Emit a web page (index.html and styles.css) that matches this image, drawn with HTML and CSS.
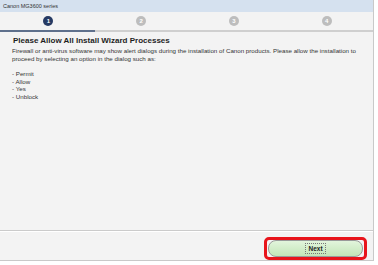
FILE: index.html
```html
<!DOCTYPE html>
<html lang="en">
<head>
    <meta charset="UTF-8">
    <title>Canon MG3600 series</title>
    <link rel="stylesheet" href="styles.css">
</head>
<body>

    <div class="window">
        <div class="titlebar">Canon MG3600 series</div>

        <!-- Pasos del asistente -->
        <div class="steps">
            <div class="step active"><span class="dot">1</span></div>
            <div class="step"><span class="dot">2</span></div>
            <div class="step"><span class="dot">3</span></div>
            <div class="step"><span class="dot">4</span></div>
        </div>

        <div class="content">
            <h1>Please Allow All Install Wizard Processes</h1>
            <p>Firewall or anti-virus software may show alert dialogs during the installation of Canon products. Please allow the installation to proceed by selecting an option in the dialog such as:</p>
            <ul class="options">
                <li>- Permit</li>
                <li>- Allow</li>
                <li>- Yes</li>
                <li>- Unblock</li>
            </ul>
        </div>

        <div class="footer">
            <span class="highlight">
                <button class="next-btn"><span class="focus">Next</span></button>
            </span>
        </div>
    </div>

</body>
</html>
```

FILE: styles.css
```css
body {
    margin: 0;
    padding: 0;
    background: #fff;
    font-family: "Liberation Sans", Arial, sans-serif;
    color: #333;
}

.window {
    width: 373px;
    height: 260px;
    background: #f3f3f3;
    border-right: 1px solid #c9c9c9;
    border-bottom: 1px solid #c9c9c9;
    display: flex;
    flex-direction: column;
}

/* Barra de titulo */
.titlebar {
    height: 12px;
    line-height: 12px;
    background: #d5e1ef;
    font-size: 5.5px;
    padding-left: 3px;
    color: #333;
}

/* Pasos */
.steps {
    display: grid;
    grid-template-columns: repeat(4, 1fr);
    padding-left: 2px;
    border-bottom: 2px solid #cfcfcf;
}

.step {
    height: 18px;
    display: flex;
    align-items: center;
    justify-content: center;
}

.step.active {
    box-shadow: 0 2px 0 #5e708c;
    margin-left: -2px;
    padding-left: 2px;
}

.dot {
    width: 10px;
    height: 10px;
    border-radius: 50%;
    background: #bdbdbd;
    color: #fff;
    font-size: 6px;
    font-weight: bold;
    line-height: 10px;
    text-align: center;
}

.step.active .dot {
    background: #263a63;
}

/* Contenido */
.content {
    flex: 1;
    padding: 4px 12px 0 12px;
}

.content h1 {
    margin: 0 0 1px 1px;
    font-size: 8px;
    line-height: 10px;
    font-weight: bold;
    color: #1e1e1e;
}

.content p {
    margin: 0;
    font-size: 6.2px;
    line-height: 8px;
    color: #333;
}

.options {
    list-style: none;
    margin: 7px 0 0 0;
    padding: 0;
    font-size: 6.2px;
    line-height: 7.6px;
    color: #333;
}

/* Pie con boton */
.footer {
    height: 30px;
    border-top: 1px solid #cbcbcb;
    box-shadow: inset 0 1px 0 #fff;
    display: flex;
    justify-content: flex-end;
    align-items: flex-start;
    padding: 6px 6px 0 0;
    box-sizing: border-box;
}

.highlight {
    display: inline-block;
    border: 3px solid #e8141b;
    border-radius: 5px;
    padding: 0 1px;
}

.next-btn {
    display: block;
    width: 95px;
    height: 17px;
    border: 1px solid #9a9a9a;
    border-radius: 8px;
    background: linear-gradient(#e2f5dc, #c3e5b8);
    font-family: "Liberation Sans", Arial, sans-serif;
    font-size: 6.5px;
    font-weight: bold;
    color: #222;
    padding: 0;
    cursor: pointer;
}

.focus {
    border: 1px dotted #777;
    padding: 1px 2px;
}
```
